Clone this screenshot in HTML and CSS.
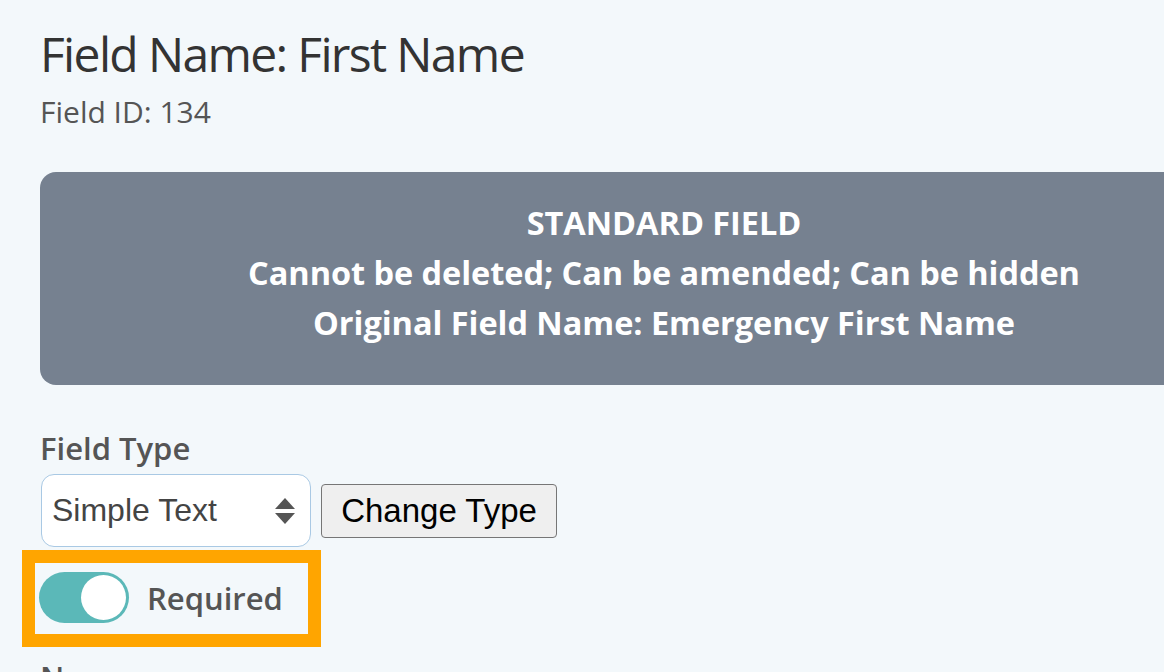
FILE: index.html
```html
<!DOCTYPE html>
<html lang="en">
<head>
<meta charset="utf-8">
<title>Field</title>
<link rel="stylesheet" href="styles.css">
</head>
<body>
<main class="page">
  <h1 class="title">Field Name: First Name</h1>
  <p class="field-id">Field ID: 134</p>

  <section class="banner">
    <p class="banner-line">STANDARD FIELD</p>
    <p class="banner-line">Cannot be deleted; Can be amended; Can be hidden</p>
    <p class="banner-line">Original Field Name: Emergency First Name</p>
  </section>

  <label class="label" for="ftype">Field Type</label>
  <div class="type-row">
    <div class="select" id="ftype">
      <span class="select-text">Simple Text</span>
      <svg class="select-arrows" width="20" height="26" viewBox="0 0 20 26" aria-hidden="true">
        <path d="M10 0 L20 11 L0 11 Z" fill="#555"/>
        <path d="M0 15 L20 15 L10 26 Z" fill="#555"/>
      </svg>
    </div>
    <button class="btn" type="button">Change Type</button>
  </div>

  <div class="highlight">
    <span class="toggle"><span class="knob"></span></span>
    <span class="toggle-label">Required</span>
  </div>

  <div class="label next-label">Name</div>
</main>
</body>
</html>
```
FILE: styles.css
```css
html, body {
  margin: 0;
  padding: 0;
  overflow: hidden;
  background: #f3f8fb;
}

.page {
  padding: 0 0 0 40px;
  font-family: "Open Sans", "Liberation Sans", sans-serif;
  color: #333;
}

.title {
  margin: 0;
  padding-top: 22px;
  font-size: 48px;
  font-weight: 400;
  line-height: 64px;
  color: #333;
  letter-spacing: -1.65px;
}

.field-id {
  margin: 8px 0 0;
  font-size: 30px;
  line-height: 36px;
  color: #555;
}

.banner {
  margin-top: 42px;
  width: 1248px;
  box-sizing: border-box;
  padding: 26px 0 37px;
  background: #768190;
  border-radius: 16px;
  text-align: center;
  color: #fff;
}

.banner-line {
  margin: 0;
  font-size: 32.5px;
  font-weight: 700;
  line-height: 50px;
  letter-spacing: -0.05px;
}

.label {
  display: block;
  margin-top: 41px;
  font-size: 31px;
  font-weight: 600;
  line-height: 44px;
  color: #555;
}

.type-row {
  display: flex;
  align-items: center;
  gap: 10px;
  margin-top: 4px;
  margin-left: 1px;
}

.select {
  box-sizing: border-box;
  width: 270px;
  height: 73px;
  display: flex;
  align-items: center;
  justify-content: space-between;
  padding: 0 15px 0 10px;
  background: #fff;
  border: 1.5px solid #a9c9e4;
  border-radius: 13px;
}

.select-text {
  font-family: "Liberation Sans", Arial, sans-serif;
  font-size: 32px;
  color: #444;
}

.btn {
  box-sizing: border-box;
  height: 54px;
  width: 236px;
  padding: 0;
  margin-top: 1px;
  background: #efefef;
  border: 1.5px solid #767676;
  border-radius: 4px;
  font-family: "Liberation Sans", Arial, sans-serif;
  font-size: 33px;
  color: #000;
}

.highlight {
  display: inline-flex;
  align-items: center;
  gap: 18px;
  margin: 3px 0 0 -18px;
  padding: 9px 25px 11px 4px;
  border: 13px solid #ffa500;
}

.toggle {
  position: relative;
  width: 90px;
  height: 51px;
  border-radius: 26px;
  background: #5bb8b8;
}

.knob {
  position: absolute;
  top: 3px;
  right: 3px;
  width: 45px;
  height: 45px;
  border-radius: 50%;
  background: #fff;
}

.toggle-label {
  font-size: 31px;
  font-weight: 600;
  color: #555;
}

.next-label {
  margin-top: 8px;
}
```
